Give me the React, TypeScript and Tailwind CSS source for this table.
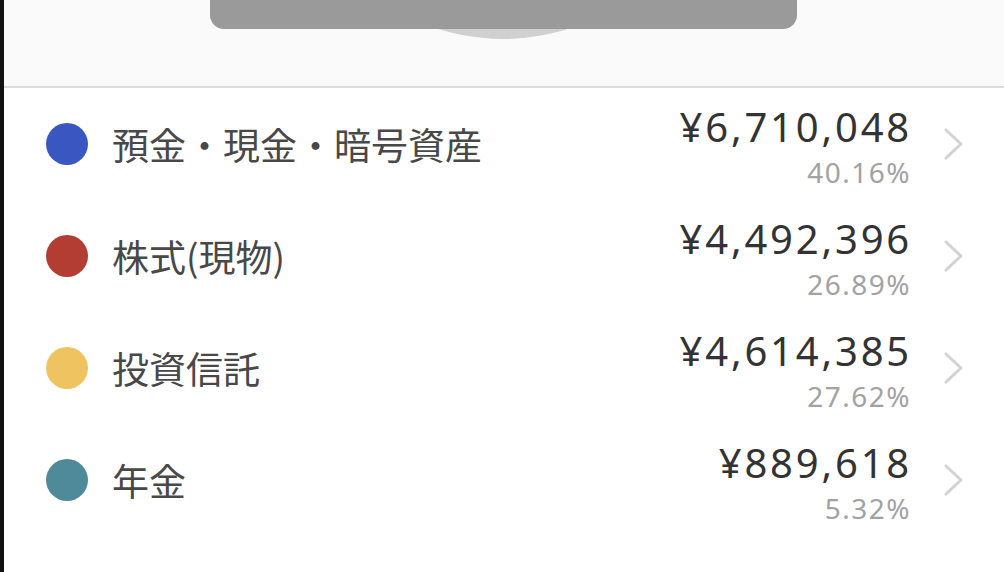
const rows = [
  { label: '預金・現金・暗号資産', amount: '¥6,710,048', pct: '40.16%', color: 'bg-[#3a56c0]' },
  { label: '株式(現物)', amount: '¥4,492,396', pct: '26.89%', color: 'bg-[#b33d33]' },
  { label: '投資信託', amount: '¥4,614,385', pct: '27.62%', color: 'bg-[#efc35f]' },
  { label: '年金', amount: '¥889,618', pct: '5.32%', color: 'bg-[#4f8a9a]' },
];

function Chevron() {
  return (
    <svg width="24" height="34" viewBox="0 0 24 34" fill="none" className="shrink-0">
      <path d="M4 3 L19 17 L4 31" stroke="#d2d2d2" strokeWidth="3" strokeLinecap="round" strokeLinejoin="round" />
    </svg>
  );
}

export default function App() {
  return (
    <div
      className="flex w-[1004px] h-[572px] overflow-hidden bg-white"
      style={{ fontFamily: '"Noto Sans CJK JP", "Noto Sans", sans-serif' }}
    >
      <div className="w-[4px] shrink-0 bg-[#111]" />
      <div className="flex-1 flex flex-col">
        <div className="relative h-[88px] shrink-0 overflow-hidden bg-[#fafafa] border-b-2 border-[#dcdcdc]">
          {/* round thing peeking out under the bar */}
          <div className="absolute left-[283px] -top-[393px] w-[432px] h-[432px] rounded-full bg-[#d0d0d0]" />
          <div className="relative ml-[206px] w-[587px] h-[29px] rounded-b-[14px] bg-[#9a9a9a]" />
        </div>

        {rows.map((r) => (
          <div key={r.label} className="flex items-center h-[112px] shrink-0 pl-[42px] pr-[38px]">
            <div className={`w-[42px] h-[42px] rounded-full shrink-0 ${r.color}`} />
            <div className="ml-[24px] flex-1 text-[37px] leading-none text-[#484848]">{r.label}</div>
            <div className="flex flex-col items-end mt-[4px] font-['Noto_Sans',sans-serif]">
              <div className="mr-[-3px] text-[40px] leading-[44px] tracking-[2.8px] text-[#333]">{r.amount}</div>
              <div className="mr-[-2px] mt-[7px] text-[28px] leading-[32px] tracking-[1.5px] text-[#a2a2a2]">{r.pct}</div>
            </div>
            <div className="ml-[33px]">
              <Chevron />
            </div>
          </div>
        ))}
      </div>
    </div>
  );
}
